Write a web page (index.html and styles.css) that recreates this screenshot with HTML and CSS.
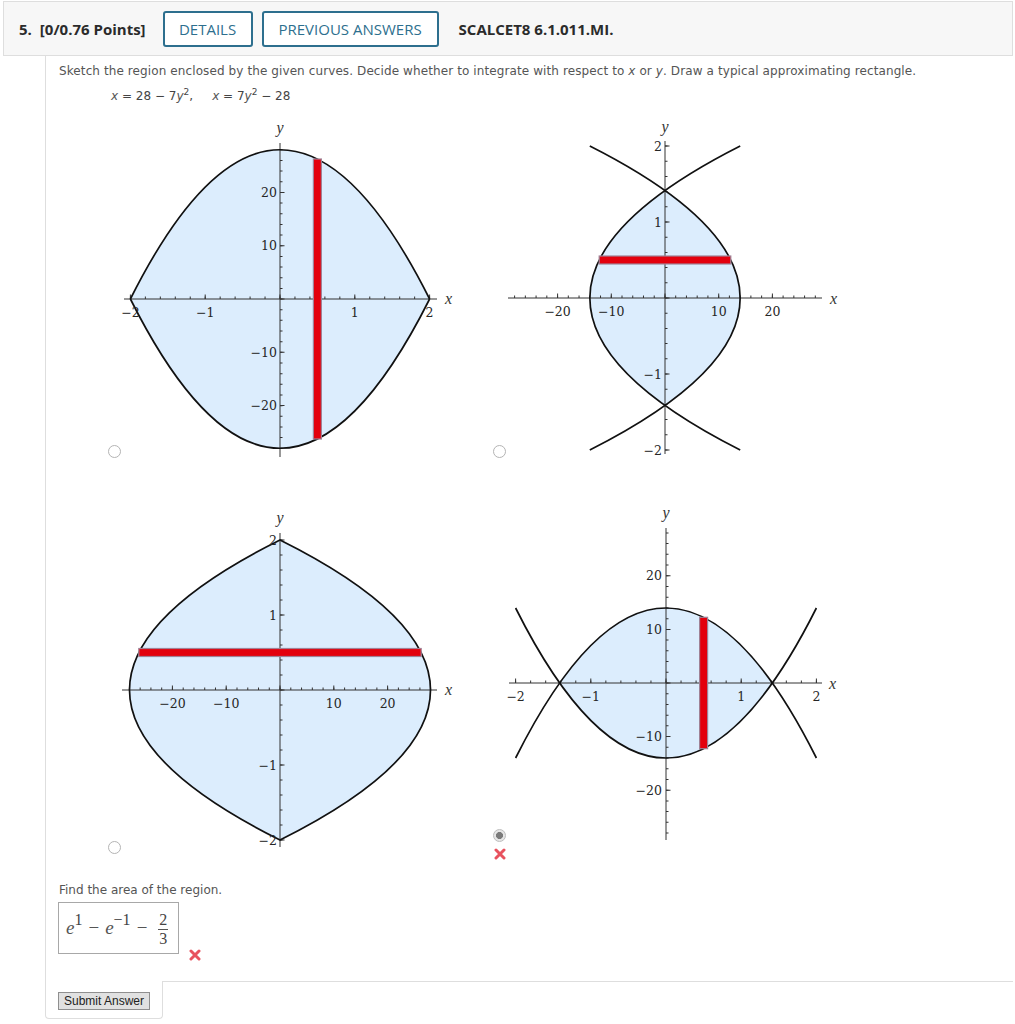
FILE: index.html
```html
<!DOCTYPE html>
<html lang="en">
<head>
<meta charset="utf-8">
<title>SCALCET8 6.1.011.MI.</title>
<link rel="stylesheet" href="styles.css">
</head>
<body>
<div class="question">
  <div class="qhead">
    <span class="qnum">5.</span>
    <span class="points">[0/0.76 Points]</span>
    <button class="hbtn hbtn-details">DETAILS</button>
    <button class="hbtn hbtn-prev">PREVIOUS ANSWERS</button>
    <span class="qid">SCALCET8 6.1.011.MI.</span>
  </div>
  <div class="qbody">
    <p class="prompt">Sketch the region enclosed by the given curves. Decide whether to integrate with respect to <i>x</i> or <i>y</i>. Draw a typical approximating rectangle.</p>
    <p class="eq"><i>x</i> = 28 − 7<i>y</i><sup>2</sup>,&nbsp;&nbsp;&nbsp;&nbsp; <i>x</i> = 7<i>y</i><sup>2</sup> − 28</p>

    <div class="options">
      <div class="opt">
        <div class="mark"><input type="radio" name="g" disabled></div>
        <svg class="plot" width="340" height="346" viewBox="121 112 340 346">
          <path class="region" d="M130.4,299 Q280,0.5 429.6,299 Q280,597.5 130.4,299Z"/>
          <line class="axis" x1="124" y1="299" x2="437" y2="299"/>
          <line class="axis" x1="280" y1="143" x2="280" y2="457"/>
          <line class="tick" x1="129.9" y1="297.75" x2="430.1" y2="297.75" stroke-width="2.5" stroke-dasharray="1 13.96"/>
          <line class="tick" x1="129.9" y1="296.75" x2="430.1" y2="296.75" stroke-width="4.5" stroke-dasharray="1 73.8"/>
          <line class="tick" x1="281.25" y1="149.3" x2="281.25" y2="448.8" stroke-width="2.5" stroke-dasharray="1 9.66"/>
          <line class="tick" x1="282.25" y1="191.9" x2="282.25" y2="406.1" stroke-width="4.5" stroke-dasharray="1 52.3"/>
          <path class="curve" d="M130.4,299 Q280,0.5 429.6,299"/>
          <path class="curve" d="M130.4,299 Q280,597.5 429.6,299"/>
          <rect class="strip" x="313.4" y="159" width="8" height="280"/>
          <text class="tl" x="130.4" y="317" text-anchor="middle">−2</text>
          <text class="tl" x="205.2" y="317" text-anchor="middle">−1</text>
          <text class="tl" x="354.8" y="317" text-anchor="middle">1</text>
          <text class="tl" x="429.6" y="317" text-anchor="middle">2</text>
          <text class="tl" x="277" y="197" text-anchor="end">20</text>
          <text class="tl" x="277" y="250.3" text-anchor="end">10</text>
          <text class="tl" x="277" y="356.9" text-anchor="end">−10</text>
          <text class="tl" x="277" y="410.2" text-anchor="end">−20</text>
          <text class="al" x="445" y="304">x</text>
          <text class="al" x="280" y="133" text-anchor="middle">y</text>
        </svg>
      </div>

      <div class="opt">
        <div class="mark"><input type="radio" name="g" disabled></div>
        <svg class="plot" width="340" height="346" viewBox="506 112 340 346">
          <path class="region" d="M665,190.5 Q815.4,298 665,405.5 Q514.6,298 665,190.5Z"/>
          <line class="axis" x1="508" y1="298" x2="822" y2="298"/>
          <line class="axis" x1="665" y1="141" x2="665" y2="454"/>
          <line class="tick" x1="514.1" y1="296.75" x2="815.9" y2="296.75" stroke-width="2.5" stroke-dasharray="1 9.74"/>
          <line class="tick" x1="557.1" y1="295.75" x2="772.9" y2="295.75" stroke-width="4.5" stroke-dasharray="1 52.7"/>
          <line class="tick" x1="666.25" y1="145.5" x2="666.25" y2="450.5" stroke-width="2.5" stroke-dasharray="1 14.2"/>
          <line class="tick" x1="667.25" y1="145.5" x2="667.25" y2="450.5" stroke-width="4.5" stroke-dasharray="1 75"/>
          <path class="curve" d="M589.8,146 Q890.5,298 589.8,450"/>
          <path class="curve" d="M740.2,146 Q439.5,298 740.2,450"/>
          <rect class="strip" x="599.2" y="256" width="131.6" height="8"/>
          <text class="tl" x="557.6" y="316" text-anchor="middle">−20</text>
          <text class="tl" x="611.3" y="316" text-anchor="middle">−10</text>
          <text class="tl" x="718.7" y="316" text-anchor="middle">10</text>
          <text class="tl" x="772.4" y="316" text-anchor="middle">20</text>
          <text class="tl" x="662" y="150.6" text-anchor="end">2</text>
          <text class="tl" x="662" y="226.6" text-anchor="end">1</text>
          <text class="tl" x="662" y="378.6" text-anchor="end">−1</text>
          <text class="tl" x="662" y="454.6" text-anchor="end">−2</text>
          <text class="al" x="830" y="304">x</text>
          <text class="al" x="665" y="132" text-anchor="middle">y</text>
        </svg>
      </div>

      <div class="opt">
        <div class="mark"><input type="radio" name="g" disabled></div>
        <svg class="plot" width="340" height="349" viewBox="121 505 340 349">
          <path class="region" d="M280,540 Q581,690 280,840 Q-21,690 280,540Z"/>
          <line class="axis" x1="122" y1="690" x2="437" y2="690"/>
          <line class="axis" x1="280" y1="533" x2="280" y2="847"/>
          <line class="tick" x1="128.9" y1="688.75" x2="431.1" y2="688.75" stroke-width="2.5" stroke-dasharray="1 9.76"/>
          <line class="tick" x1="171.9" y1="687.75" x2="388.1" y2="687.75" stroke-width="4.5" stroke-dasharray="1 52.8"/>
          <line class="tick" x1="281.25" y1="539.5" x2="281.25" y2="840.5" stroke-width="2.5" stroke-dasharray="1 14"/>
          <line class="tick" x1="282.25" y1="539.5" x2="282.25" y2="840.5" stroke-width="4.5" stroke-dasharray="1 74"/>
          <path class="curve" d="M280,540 Q581,690 280,840 Q-21,690 280,540Z"/>
          <rect class="strip" x="138.8" y="648.5" width="282.4" height="8"/>
          <text class="tl" x="172.4" y="708" text-anchor="middle">−20</text>
          <text class="tl" x="226.2" y="708" text-anchor="middle">−10</text>
          <text class="tl" x="333.8" y="708" text-anchor="middle">10</text>
          <text class="tl" x="387.6" y="708" text-anchor="middle">20</text>
          <text class="tl" x="277" y="544.6" text-anchor="end">2</text>
          <text class="tl" x="277" y="619.6" text-anchor="end">1</text>
          <text class="tl" x="277" y="769.6" text-anchor="end">−1</text>
          <text class="tl" x="277" y="844.6" text-anchor="end">−2</text>
          <text class="al" x="445" y="695">x</text>
          <text class="al" x="280" y="523" text-anchor="middle">y</text>
        </svg>
      </div>

      <div class="opt">
        <div class="mark mark-chosen">
          <input type="radio" name="g" disabled checked>
          <svg class="xmark" width="12" height="12" viewBox="0 0 12 12"><path d="M2,2 L10,10 M10,2 L2,10"/></svg>
        </div>
        <svg class="plot" width="340" height="349" viewBox="506 505 340 349">
          <path class="region" d="M559.7,683 Q666,533 772.3,683 Q666,833 559.7,683Z"/>
          <line class="axis" x1="509" y1="683" x2="822" y2="683"/>
          <line class="axis" x1="666" y1="528" x2="666" y2="840"/>
          <line class="tick" x1="515.1" y1="681.75" x2="816.9" y2="681.75" stroke-width="2.5" stroke-dasharray="1 14.04"/>
          <line class="tick" x1="515.1" y1="680.75" x2="816.9" y2="680.75" stroke-width="4.5" stroke-dasharray="1 74.2"/>
          <line class="tick" x1="667.25" y1="532.4" x2="667.25" y2="833.6" stroke-width="2.5" stroke-dasharray="1 9.72"/>
          <line class="tick" x1="668.25" y1="575.3" x2="668.25" y2="790.7" stroke-width="4.5" stroke-dasharray="1 52.6"/>
          <path class="curve" d="M515.6,758 Q666,458 816.4,758"/>
          <path class="curve" d="M515.6,608 Q666,908 816.4,608"/>
          <rect class="strip" x="699.6" y="617.3" width="8" height="131.4"/>
          <text class="tl" x="515.6" y="701" text-anchor="middle">−2</text>
          <text class="tl" x="590.8" y="701" text-anchor="middle">−1</text>
          <text class="tl" x="741.2" y="701" text-anchor="middle">1</text>
          <text class="tl" x="816.4" y="701" text-anchor="middle">2</text>
          <text class="tl" x="662" y="580.4" text-anchor="end">20</text>
          <text class="tl" x="662" y="634" text-anchor="end">10</text>
          <text class="tl" x="662" y="741.2" text-anchor="end">−10</text>
          <text class="tl" x="662" y="794.8" text-anchor="end">−20</text>
          <text class="al" x="829" y="689">x</text>
          <text class="al" x="666" y="518" text-anchor="middle">y</text>
        </svg>
      </div>
    </div>

    <p class="find">Find the area of the region.</p>
    <div class="answer-row">
      <div class="ansbox"><span class="mi">e</span><span class="ms">1</span><span class="mo">−</span><span class="mi">e</span><span class="ms">−1</span><span class="mo">−</span><span class="frac"><span class="num">2</span><span class="den">3</span></span></div>
      <svg class="xmark xmark-ans" width="12" height="12" viewBox="0 0 12 12"><path d="M2,2 L10,10 M10,2 L2,10"/></svg>
    </div>
  </div>
  <div class="qfoot">
    <div class="submitcell"><button class="submit">Submit Answer</button></div>
    <div class="footrest"></div>
  </div>
</div>
</body>
</html>
```

FILE: styles.css
```css
* { box-sizing: border-box; }

body {
  margin: 1px 2px 0 3px;
  font-family: "DejaVu Sans", Verdana, sans-serif;
  color: #444;
  background: #fff;
}

.qhead {
  height: 55px;
  border: 1px solid #dedede;
  background: #f7f7f7;
  display: flex;
  align-items: center;
  padding-left: 15px;
  font-family: "Open Sans", sans-serif;
  font-size: 15px;
  color: #2b2b2b;
}
.qnum { font-weight: 700; margin-right: 8px; }
.points { font-weight: 700; margin-right: 17px; }
.hbtn {
  height: 36px;
  padding: 0;
  border: 2px solid #2d6f8e;
  border-radius: 3px;
  background: #fff;
  color: #2d6f8e;
  font-family: "Open Sans", sans-serif;
  font-size: 15px;
  font-weight: 500;
  margin-right: 9px;
  text-align: center;
}
.hbtn-details { width: 90px; }
.hbtn-prev { width: 177px; }
.qid { font-weight: 700; margin-left: 11px; }

.qbody {
  margin-left: 42px;
  border-left: 1px solid #dedede;
  padding: 8px 0 27px 13px;
}
.prompt {
  margin: 0;
  font-size: 12px;
  letter-spacing: 0.1px;
  line-height: 15px;
  color: #555;
}
.eq {
  margin: 10px 0 0 52px;
  font-size: 12px;
  line-height: 15px;
  color: #444;
}
.eq i { color: #555; }
.eq sup { font-size: 9px; vertical-align: 5px; line-height: 0; }

.options {
  margin: 8px 0 0 49px;
  display: grid;
  grid-template-columns: 385px 385px;
  grid-template-rows: 346px 349px;
  row-gap: 47px;
}
.opt { display: flex; align-items: flex-end; }
.mark {
  width: 13px;
  display: flex;
  flex-direction: column;
  align-items: center;
}
.mark input {
  appearance: none;
  -webkit-appearance: none;
  width: 13px;
  height: 13px;
  margin: 0;
  border: 1px solid #b4b4b4;
  border-radius: 50%;
  background: #fff;
}
.mark input:checked {
  border-color: #bdbdbd;
  background: radial-gradient(circle, #7b7b7b 0, #7b7b7b 3.2px, #e6e6e6 3.8px, #e6e6e6 100%);
}
.mark-chosen { margin-bottom: -6px; gap: 6px; }
.plot { display: block; flex: none; }

.region { fill: #dcedfd; }
.curve { fill: none; stroke: #111; stroke-width: 1.7; }
.axis { stroke: #333; stroke-width: 1; }
.tick { stroke: #333; }
.strip { fill: #e3000d; stroke: #a08296; stroke-width: 1.2; }
.tl { font-family: "DejaVu Serif", serif; font-size: 12.5px; fill: #262626; }
.al { font-family: "Liberation Serif", serif; font-style: italic; font-size: 16px; fill: #333; }

.xmark path { stroke: #e8525e; stroke-width: 3; stroke-linecap: round; fill: none; }

.find {
  margin: 29px 0 0 0;
  font-size: 12px;
  line-height: 15px;
  color: #555;
}
.answer-row {
  margin-top: 4px;
  display: flex;
  align-items: flex-end;
}
.ansbox {
  height: 52px;
  width: 121px;
  margin-left: -1px;
  border: 1px solid #a8a8a8;
  padding: 0 0 0 7px;
  line-height: 50px;
  font-family: "Liberation Serif", serif;
  font-size: 19px;
  color: #555;
  white-space: nowrap;
}
.mi { font-style: italic; }
.ms { font-size: 16px; vertical-align: 9px; line-height: 0; color: #444; }
.mo { margin: 0 6px; color: #555; }
.frac {
  display: inline-block;
  vertical-align: middle;
  line-height: 1;
  font-size: 16px;
  text-align: center;
  color: #444;
  margin-left: 5px;
}
.num { display: block; border-bottom: 1px solid #555; padding: 0 1px 1px; }
.den { display: block; padding-top: 1px; }
.xmark-ans { margin: 0 0 -7px 10px; }

.qfoot {
  margin-left: 42px;
  display: flex;
  align-items: flex-start;
}
.submitcell {
  width: 118px;
  height: 38px;
  border: 1px solid #dedede;
  border-top: none;
  border-radius: 0 0 4px 4px;
  padding: 11px 0 0 12px;
}
.submit {
  display: block;
  height: 18px;
  width: 92px;
  padding: 0;
  border: 1px solid #8f8f8f;
  background: #e1e1e1;
  font-family: "Liberation Sans", Arial, sans-serif;
  font-size: 12px;
  color: #222;
}
.footrest { flex: 1; border-top: 1px solid #dedede; }
```
